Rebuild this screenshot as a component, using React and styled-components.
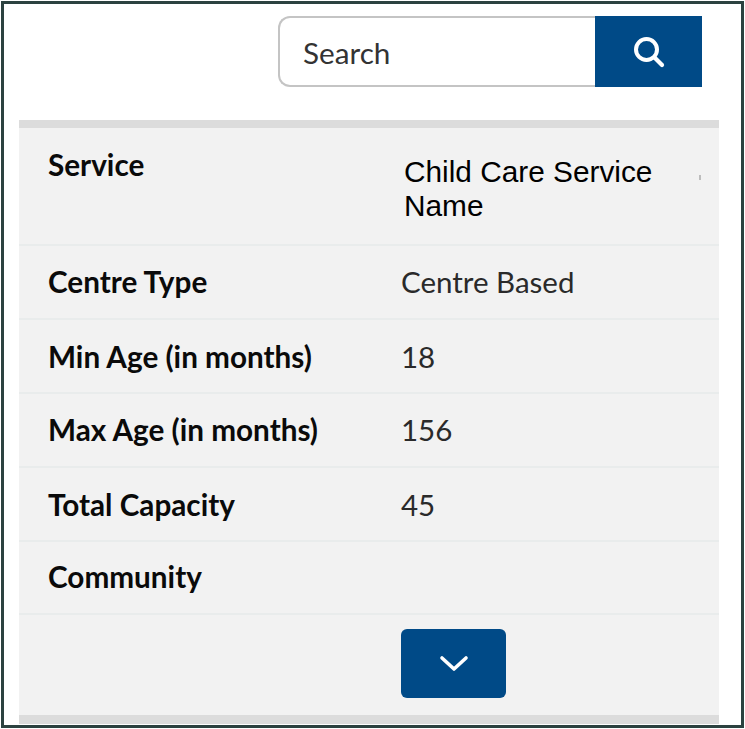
import React from "react";
import styled, { createGlobalStyle } from "styled-components";

const Global = createGlobalStyle`
  html, body { margin: 0; padding: 0; background: #fff; }
  body { font-family: "Lato", "Liberation Sans", sans-serif; }
`;

const Frame = styled.div`
  box-sizing: border-box;
  width: 743px;
  height: 727px;
  margin: 1px;
  border: 3px solid #2c4240;
  background: #fff;
  padding: 12px 22px 0 15px;
`;

const Toolbar = styled.div`
  display: flex;
  justify-content: flex-end;
  padding-right: 17px;
  margin-bottom: 33px;
`;

const SearchField = styled.div`
  box-sizing: border-box;
  width: 317px;
  height: 71px;
  display: flex;
  align-items: center;
  padding: 1px 0 0 23px;
  border: 2px solid #c4c4c4;
  border-right: 0;
  border-radius: 12px 0 0 12px;
  background: #fff;
  font-size: 29.7px;
  color: #333;
`;

const SearchButton = styled.div`
  width: 107px;
  height: 71px;
  background: #004a87;
  display: flex;
  align-items: center;
  justify-content: center;
`;

const Panel = styled.div`
  width: 700px;
  background: #f2f2f2;
  border-top: 8px solid #dcdcdc;
  border-bottom: 9px solid #dcdcdc;
`;

const Row = styled.div`
  box-sizing: border-box;
  height: ${(p) => p.$height}px;
  display: grid;
  grid-template-columns: 352px 1fr;
  align-items: start;
  padding: ${(p) => p.$top}px 0 0 30px;
  border-bottom: 2px solid #e9ecec;
`;

const Label = styled.div`
  margin-left: -1px;
  font-weight: 700;
  font-size: 29.7px;
  line-height: 34px;
  color: #0a0a0a;
`;

const Value = styled.div`
  font-size: 29.5px;
  line-height: 34px;
  color: #2a2a2a;
`;

const NameCell = styled.div`
  position: relative;
  padding: 7px 30px 0 3px;
  font-family: "Liberation Sans", Arial, sans-serif;
  font-size: 29.8px;
  line-height: 34px;
  color: #000;
`;

const Speck = styled.span`
  position: absolute;
  left: 298px;
  top: 27px;
  width: 2px;
  height: 5px;
  background: #bdbdbd;
`;

const ButtonRow = styled.div`
  height: 100px;
  display: flex;
  justify-content: flex-start;
  padding: 14px 0 0 382px;
  box-sizing: border-box;
`;

const ExpandButton = styled.div`
  width: 105px;
  height: 69px;
  border-radius: 6px;
  background: #004a87;
  display: flex;
  align-items: center;
  justify-content: center;
`;

const rows = [
  ["Centre Type", "Centre Based", 74, 19],
  ["Min Age (in months)", "18", 74, 20],
  ["Max Age (in months)", "156", 74, 19],
  ["Total Capacity", "45", 74, 20],
  ["Community", "", 73, 18],
];

export default function App() {
  return (
    <>
      <Global />
      <Frame>
        <Toolbar>
          <SearchField>Search</SearchField>
          <SearchButton>
            <svg width="32" height="32" viewBox="0 0 32 32" fill="none" stroke="#fff" strokeLinecap="round">
              <circle cx="13.5" cy="13.5" r="10.5" strokeWidth="4" />
              <path d="M21.5 21.5 L29 29" strokeWidth="4.2" />
            </svg>
          </SearchButton>
        </Toolbar>
        <Panel>
          <Row $height={118} $top={20}>
            <Label>Service</Label>
            <NameCell>
              Child Care Service Name
              <Speck />
            </NameCell>
          </Row>
          {rows.map(([label, value, height, top]) => (
            <Row key={label} $height={height} $top={top}>
              <Label>{label}</Label>
              <Value>{value}</Value>
            </Row>
          ))}
          <ButtonRow>
            <ExpandButton>
              <svg width="30" height="20" viewBox="0 0 30 20" fill="none" stroke="#fff" strokeWidth="3.6" strokeLinecap="round" strokeLinejoin="round">
                <path d="M3 4 L15 15 L27 4" />
              </svg>
            </ExpandButton>
          </ButtonRow>
        </Panel>
      </Frame>
    </>
  );
}
